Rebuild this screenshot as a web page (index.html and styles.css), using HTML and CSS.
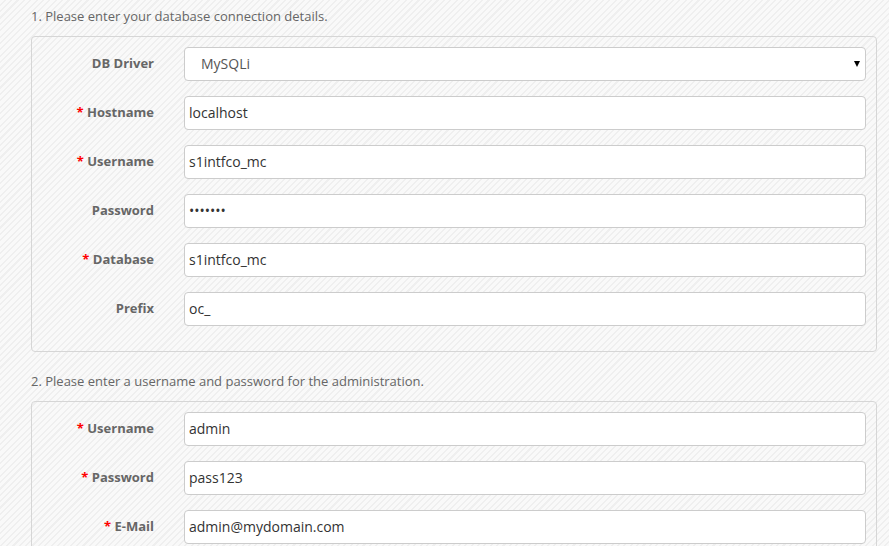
FILE: index.html
```html
<!DOCTYPE html>
<html>
<head>
<meta charset="utf-8">
<link rel="stylesheet" href="styles.css">
</head>
<body>
<div class="page">
  <p class="step">1. Please enter your database connection details.</p>
  <div class="box">
    <div class="row">
      <label class="lbl">DB Driver</label>
      <div class="select-wrap">
        <select class="field select"><option>MySQLi</option></select>
      </div>
    </div>
    <div class="row">
      <label class="lbl"><span class="req">*</span> Hostname</label>
      <input class="field" type="text" value="localhost">
    </div>
    <div class="row">
      <label class="lbl"><span class="req">*</span> Username</label>
      <input class="field" type="text" value="s1intfco_mc">
    </div>
    <div class="row">
      <label class="lbl">Password</label>
      <input class="field" type="password" value="1234567">
    </div>
    <div class="row">
      <label class="lbl"><span class="req">*</span> Database</label>
      <input class="field" type="text" value="s1intfco_mc">
    </div>
    <div class="row">
      <label class="lbl">Prefix</label>
      <input class="field" type="text" value="oc_">
    </div>
  </div>

  <p class="step">2. Please enter a username and password for the administration.</p>
  <div class="box">
    <div class="row">
      <label class="lbl"><span class="req">*</span> Username</label>
      <input class="field" type="text" value="admin">
    </div>
    <div class="row">
      <label class="lbl"><span class="req">*</span> Password</label>
      <input class="field" type="text" value="pass123">
    </div>
    <div class="row">
      <label class="lbl"><span class="req">*</span> E-Mail</label>
      <input class="field" type="text" value="admin@mydomain.com">
    </div>
  </div>
</div>
</body>
</html>
```

FILE: styles.css
```css
html, body {
  margin: 0;
  padding: 0;
  overflow: hidden;
}
body {
  font-family: "Open Sans", "Liberation Sans", sans-serif;
  background-color: #f8f8f8;
  background-image: repeating-linear-gradient(135deg, #f9f9f9 0px, #f9f9f9 3px, #efefef 3px, #efefef 4.5px);
  height: 546px;
}
.page {
  padding: 6px 12px 0 31px;
}
.step {
  margin: 0 0 10px 0;
  font-size: 13px;
  line-height: 20px;
  color: #666;
}
.box {
  border: 1px solid #d6d6d6;
  border-radius: 4px;
  padding: 10px 10px 10px 0;
  margin-bottom: 19px;
}
.row {
  display: flex;
  align-items: center;
  gap: 30px;
  margin-bottom: 15px;
}
.lbl {
  width: 122px;
  flex: none;
  text-align: right;
  font-size: 13px;
  font-weight: bold;
  color: #666;
  padding-bottom: 2px;
}
.req {
  color: #f00;
}
.field {
  flex: 1;
  box-sizing: border-box;
  height: 34px;
  border: 1px solid #ccc;
  border-radius: 4px;
  background: #fff;
  font-family: "Open Sans", "Liberation Sans", sans-serif;
  font-size: 14px;
  color: #333;
  padding: 0 4px 2px 4px;
  margin: 0;
  outline: none;
}
.select-wrap {
  flex: 1;
  position: relative;
  display: flex;
}
.select {
  -webkit-appearance: none;
  appearance: none;
  padding-left: 16px;
  color: #555;
}
.select-wrap::after {
  content: "";
  position: absolute;
  right: 6px;
  top: 14px;
  border-left: 3.5px solid transparent;
  border-right: 3.5px solid transparent;
  border-top: 6px solid #000;
}
```
